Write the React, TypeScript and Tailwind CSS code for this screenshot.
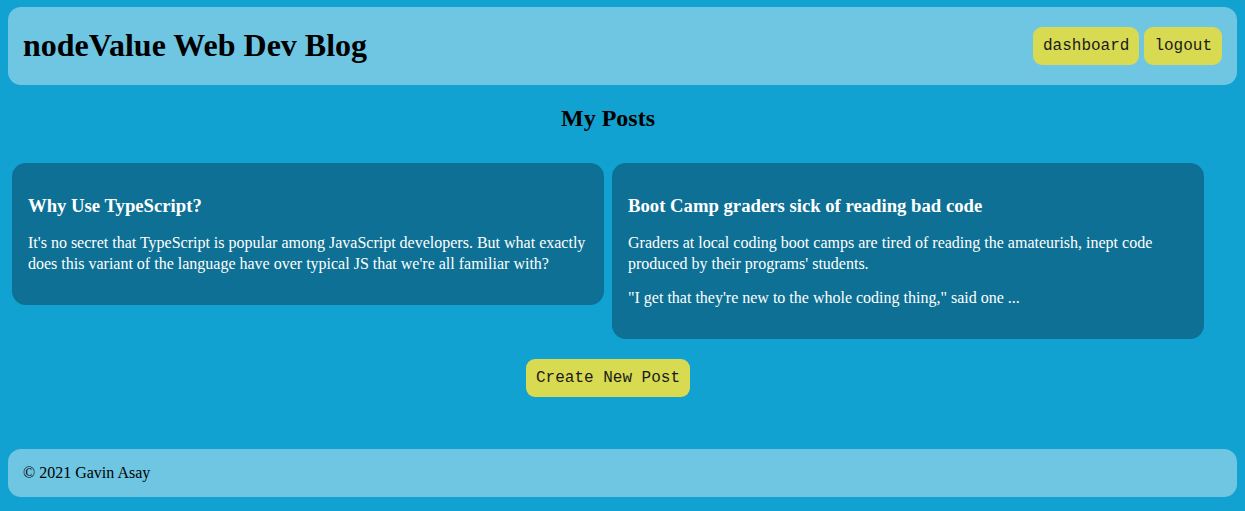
import React from 'react'

interface Post {
  title: string
  body: string[]
}

const posts: Post[] = [
  {
    title: 'Why Use TypeScript?',
    body: [
      "It's no secret that TypeScript is popular among JavaScript developers. But what exactly does this variant of the language have over typical JS that we're all familiar with?",
    ],
  },
  {
    title: 'Boot Camp graders sick of reading bad code',
    body: [
      "Graders at local coding boot camps are tired of reading the amateurish, inept code produced by their programs' students.",
      '"I get that they\'re new to the whole coding thing," said one ...',
    ],
  },
]

const serif = { fontFamily: '"Liberation Serif", "Times New Roman", serif' }

const YellowButton = ({ label, className = '' }: { label: string; className?: string }) => (
  <button
    className={`h-[38px] px-[10px] rounded-[9px] bg-[#d8da52] text-[#1a1a1a] text-[16px] font-['Liberation_Mono',monospace] ${className}`}
  >
    {label}
  </button>
)

const PostCard = ({ title, body }: Post) => (
  <div className="flex-1 m-1 rounded-[14px] bg-[#0d7094] text-white px-4 pt-[32px] pb-[31px]">
    <h3 className="text-[18.7px] font-bold leading-[22px] mb-[15px]">{title}</h3>
    {body.map((p, i) => (
      <p key={i} className={`text-[16px] leading-[21px] ${i > 0 ? 'mt-[13px]' : ''}`}>
        {p}
      </p>
    ))}
  </div>
)

export default function App() {
  return (
    <div className="min-h-screen bg-[#11a2d1] pt-[7px] pb-[14px] text-black" style={serif}>
      <header className="mx-2 h-[78px] rounded-[13px] bg-[#6fc6e2] flex items-center justify-between px-[15px]">
        <h1 className="text-[32px] font-bold leading-none -mt-[2px]">nodeValue Web Dev Blog</h1>
        <nav className="flex gap-[5px] -mt-[1px]">
          <YellowButton label="dashboard" />
          <YellowButton label="logout" />
        </nav>
      </header>

      <main className="w-[1200px] ml-2">
        <h2 className="text-[24px] font-bold leading-[28px] text-center mt-[19px]">My Posts</h2>
        <div className="flex items-start mt-[27px]">
          {posts.map((post, i) => (
            <PostCard key={i} {...post} />
          ))}
        </div>
        <div className="flex justify-center mt-[16px]">
          <YellowButton label="Create New Post" />
        </div>
      </main>

      <footer className="mx-2 mt-[52px] h-[48px] rounded-[13px] bg-[#6fc6e2] flex items-center px-[15px] text-[16px]">
        © 2021 Gavin Asay
      </footer>
    </div>
  )
}
